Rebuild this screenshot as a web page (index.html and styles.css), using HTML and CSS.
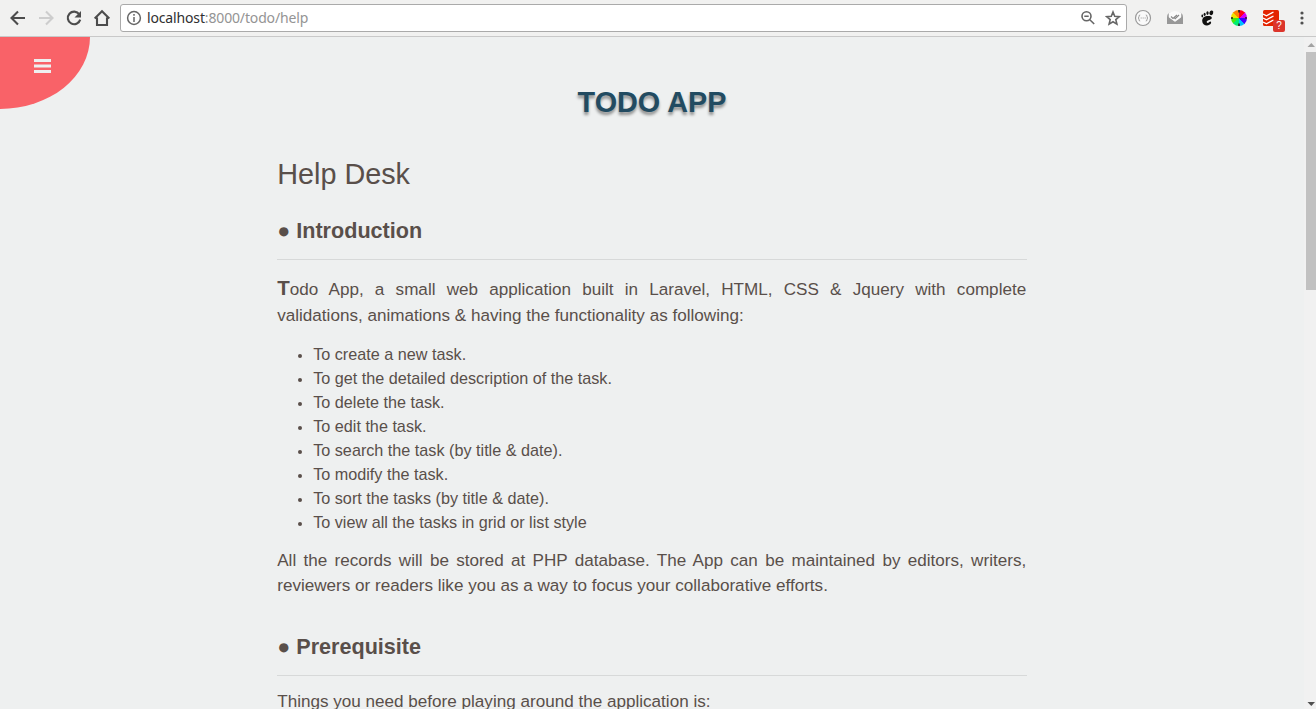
FILE: index.html
```html
<!DOCTYPE html>
<html lang="en">
<head>
<meta charset="utf-8">
<title>Todo App - Help</title>
<link rel="stylesheet" href="styles.css">
</head>
<body>
<header class="toolbar">
  <nav class="nav-buttons">
    <svg width="18" height="18" viewBox="0 0 18 18" class="icon"><path d="M16 9H3M9 2.5L2.5 9L9 15.5"/></svg>
    <svg width="18" height="18" viewBox="0 0 18 18" class="icon icon-off"><path d="M2 9h13M9 2.5L15.500 9L9 15.500"/></svg>
    <svg width="18" height="18" viewBox="0 0 18 18" class="icon"><path d="M14.300 5.300A6.300 6.300 0 1 0 15.200 10.600"/><path class="solid" d="M16 2v6.500H9.500z"/></svg>
    <svg width="18" height="18" viewBox="0 0 18 18" class="icon"><path d="M1.700 9.500L9 2.300L16.300 9.500M4 8.500V16H14V8.500"/></svg>
  </nav>
  <div class="address">
    <svg width="16" height="16" viewBox="0 0 16 16" class="info"><circle cx="8" cy="8" r="6.400"/><path d="M8 7v5M8 4v1.700"/></svg>
    <span class="url"><span class="host">localhost</span>:8000/todo/help</span>
    <svg width="16" height="16" viewBox="0 0 16 16" class="glyph"><circle cx="6.500" cy="6.300" r="4.500"/><path d="M4.300 6.300h4.400M9.800 9.700L14.200 14"/></svg>
    <svg width="16" height="16" viewBox="0 0 16 16" class="glyph star"><path d="M8 2l1.700 4.300 4.600.3-3.500 3 1.100 4.500L8 11.700l-3.900 2.400 1.100-4.500-3.500-3 4.600-.3z"/></svg>
  </div>
  <div class="extensions">
    <svg width="18" height="18" viewBox="0 0 18 18"><circle cx="9" cy="9" r="7.500" fill="#fafafa" stroke="#999" stroke-width="1.200"/><path d="M6.200 6Q4.800 6 5 7.500Q5 8.800 4 9Q5 9.200 5 10.500Q4.800 12 6.200 12M11.800 6Q13.200 6 13 7.500Q13 8.800 14 9Q13 9.200 13 10.500Q13.200 12 11.800 12" fill="none" stroke="#999"/><path d="M6.700 9h5" stroke="#999" stroke-dasharray="1 1"/></svg>
    <svg width="18" height="18" viewBox="0 0 18 18"><path d="M1 6l3-3h10l3 3v9H1z" fill="#b0b0b0"/><path d="M3 3.500L9 2l6 1.500V9l-6 4-6-4z" fill="#fafafa"/><path d="M1 7l8 6 8-6v8H1z" fill="#989898"/><path d="M5 7.500l2 2L11 6M8.500 9l.7.700L13 6" fill="none" stroke="#888" stroke-width="1.200"/></svg>
    <svg width="18" height="18" viewBox="0 0 18 18"><g fill="#111"><ellipse cx="13.300" cy="3.800" rx="1.900" ry="2.400" transform="rotate(20 13.300 3.800)"/><ellipse cx="9.500" cy="4.100" rx="1.200" ry="1.800"/><ellipse cx="6.600" cy="5.300" rx="1" ry="1.600"/><ellipse cx="4.300" cy="7" rx=".9" ry="1.400"/><path d="M11.500 7C7 6.500 4 8.500 4.200 12c.2 3 2.300 4.700 5 4.500 2.600-.2 4.300-2 3.900-3.500-.3-1-1.600-.5-2.100.3-.7 1-2.300.9-2.300-.5 0-2 5.500-1.700 5.100-4.100-.2-1-1.100-1.600-2.300-1.700z"/></g></svg>
    <span class="wheel"><svg width="16" height="16" viewBox="0 0 16 16"><path d="M8 0v2.500M0 8h2M14 8h2M8 13.500V16" stroke="#222" stroke-width="1.600"/></svg></span>
    <span class="todoist">
      <svg width="16" height="16" viewBox="0 0 16 16"><rect width="16" height="16" rx="1.500" fill="#e32400"/><path d="M0 4l3.500 1.800L10.500 2M0 8l3.500 1.800L10.500 6M0 12l3.500 1.800L10.500 10" fill="none" stroke="#fff" stroke-width="1.400"/></svg>
      <span class="badge">?</span>
    </span>
    <svg width="18" height="18" viewBox="0 0 18 18" class="more"><circle cx="9" cy="4" r="1.600"/><circle cx="9" cy="9" r="1.600"/><circle cx="9" cy="14" r="1.600"/></svg>
  </div>
</header>
<div class="viewport">
  <main class="page">
    <button class="menu" aria-label="Menu"><svg width="17" height="14" viewBox="0 0 17 14"><path d="M0 1.500h17M0 7h17M0 12.500h17"/></svg></button>
    <article class="content">
      <h1 class="brand">TODO APP</h1>
      <h2 class="title">Help Desk</h2>
      <h3 class="section">● Introduction</h3>
      <p class="text intro">Todo App, a small web application built in Laravel, HTML, CSS &amp; Jquery with complete validations,&nbsp;animations &amp; having the functionality as following:</p>
      <ul class="features">
        <li>To create a new task.</li>
        <li>To get the detailed description of the task.</li>
        <li>To delete the task.</li>
        <li>To edit the task.</li>
        <li>To search the task (by title &amp; date).</li>
        <li>To modify the task.</li>
        <li>To sort the tasks (by title &amp; date).</li>
        <li>To view all the tasks in grid or list style</li>
      </ul>
      <p class="text">All the records will be stored at PHP database. The App can be maintained by editors, writers, reviewers or readers like you as a way to focus your collaborative efforts.</p>
      <h3 class="section section-next">● Prerequisite</h3>
      <p class="text">Things you need before playing around the application is:</p>
    </article>
  </main>
  <aside class="scrollbar">
    <svg width="12" height="15" viewBox="0 0 12 15"><path d="M3.500 10L7.300 6L11 10z" fill="#a3a3a3"/></svg>
    <div class="thumb"></div>
    <svg width="12" height="15" viewBox="0 0 12 15" class="down"><path d="M3.500 8H11L7.300 12z" fill="#505050"/></svg>
  </aside>
</div>
</body>
</html>
```

FILE: styles.css
```css
* { box-sizing: border-box; }
body { margin: 0; height: 709px; overflow: hidden; display: flex; flex-direction: column; background: #eef0f0; font-family: "Liberation Sans", Arial, sans-serif; color: #594f4a; }
svg { display: block; flex: none; }
.toolbar { flex: none; height: 37px; display: flex; align-items: center; background: #f1f1f0; border-bottom: 1px solid #c9c9c9; }
.nav-buttons { width: 120px; display: flex; gap: 10px; padding-left: 9px; }
.icon { fill: none; stroke: #4c4c4c; stroke-width: 2.100; }
.icon-off { stroke: #cdcdcd; }
.solid { fill: #4c4c4c; stroke: none; }
.address { width: 1007px; height: 28px; display: flex; align-items: center; padding: 0 5px; background: #fff; border: 1px solid #aaa; border-radius: 3px; }
.info { fill: none; stroke: #666; stroke-width: 1.500; }
.url { flex: 1; margin-left: 5px; font: 14px/20px "Noto Sans", sans-serif; letter-spacing: -.15px; color: #949494; }
.host { color: #303030; }
.glyph { fill: none; stroke: #666; stroke-width: 1.600; }
.star { margin-left: 9px; }
.extensions { display: flex; align-items: center; gap: 14px; padding-left: 7px; }
.wheel { width: 16px; height: 16px; margin: 0 1px; border-radius: 50%; background: conic-gradient(#ff0018 0 45deg, #d400f5 45deg 95deg, #4000ff 95deg 140deg, #00bfff 140deg 180deg, #00ed70 180deg 225deg, #45e810 225deg 270deg, #eee000 270deg 315deg, #ff8500 315deg); }
.todoist { position: relative; width: 18px; height: 18px; padding: 1px 0 0 1px; }
.badge { position: absolute; left: 11px; top: 11px; width: 12px; height: 12px; border-radius: 2px; background: #dc352b; color: #fff; font: 10px/12px "Liberation Sans", Arial, sans-serif; text-align: center; }
.more { fill: #505050; margin-left: -1px; }
.viewport { flex: 1; min-height: 0; display: flex; }
.page { flex: 1; overflow: hidden; display: grid; grid-template-columns: 277px 750px; align-items: start; }
.menu { width: 90px; height: 72px; display: flex; align-items: flex-start; padding: 22px 0 0 34px; background: #f96268; border: 0; border-radius: 0 0 90px 0 / 0 0 72px 0; }
.menu svg { stroke: #eef0f0; stroke-width: 3; }
.brand { margin: 49px 0 0; font-size: 28.800px; line-height: 33px; text-align: center; color: #224b61; text-shadow: 0 3px 3px rgba(0, 0, 0, .4); }
.title { margin: 39px 0 0; padding-left: .2px; font-size: 28.800px; line-height: 33px; font-weight: 400; }
.section { margin: 27px 0 17px; padding: 0 0 16px .2px; border-bottom: 1px solid #d7d9d9; font-size: 21.600px; line-height: 25px; font-weight: 700; }
.section-next { margin-top: 35.400px; margin-bottom: 13px; }
.text { margin: 0; padding: 0 .8px 0 .2px; font-size: 17.100px; line-height: 25.500px; text-align: justify; }
.intro::first-letter { font-size: 20.500px; font-weight: 700; line-height: 1; }
.features { margin: 14px 0 13.600px; padding-left: 36.200px; font-size: 16.200px; line-height: 24px; }
.features li::marker { font-size: 14px; }
.scrollbar { width: 12px; display: flex; flex-direction: column; background: #f1f1f1; }
.thumb { width: 10px; height: 238px; margin-left: 2px; background: #c1c1c1; }
.down { margin-top: auto; }
```
